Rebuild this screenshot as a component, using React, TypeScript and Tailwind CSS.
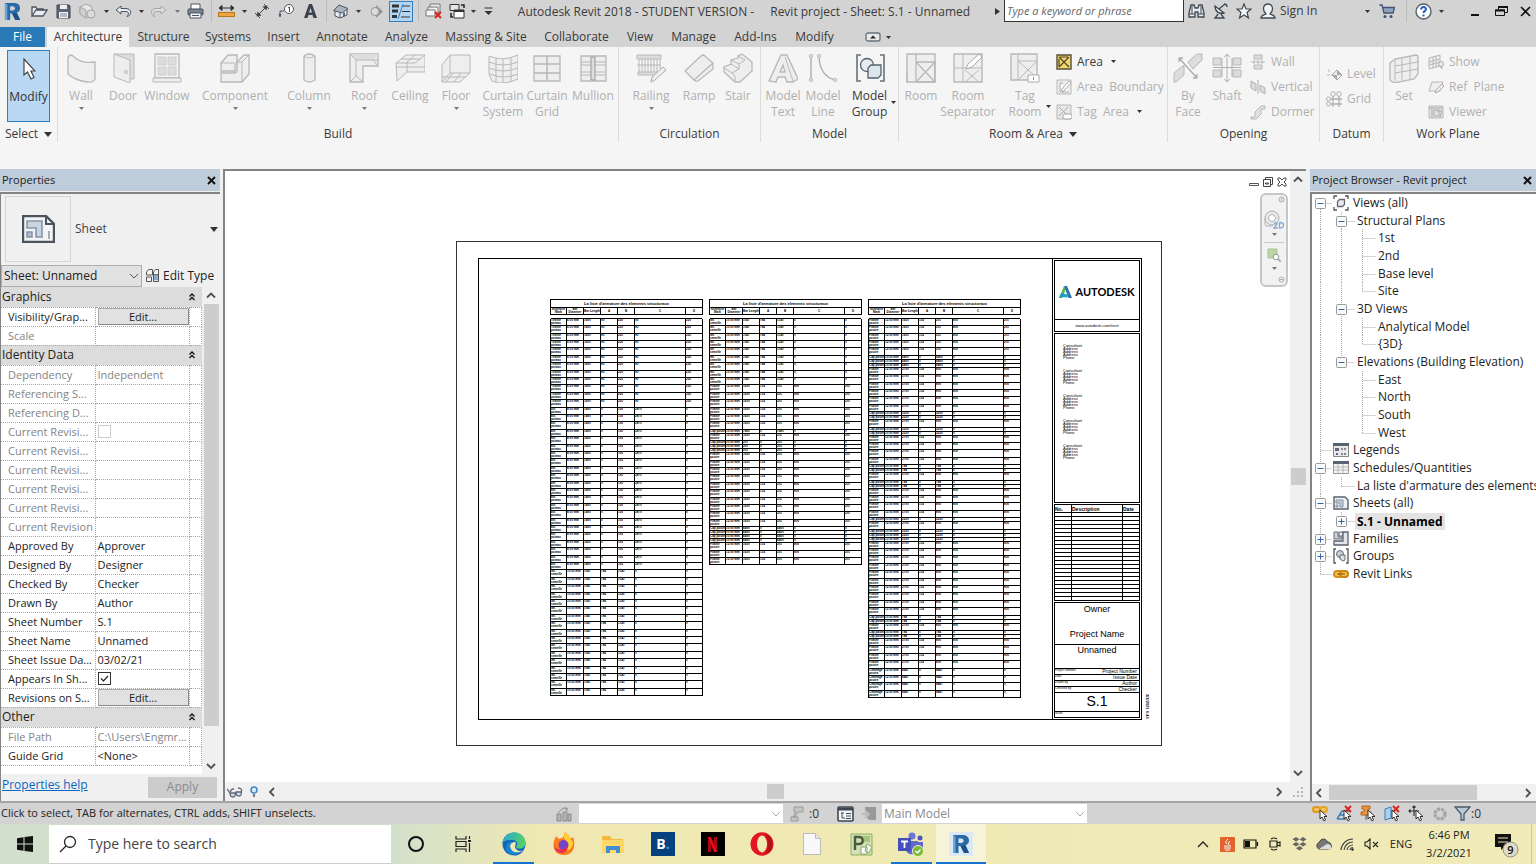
import React from "react";

type Kids = { children?: React.ReactNode };

function Svg({ w, h, vb, className = "", children }: Kids & { w: number; h: number; vb?: string; className?: string }) {
  return (
    <svg width={w} height={h} viewBox={vb ?? `0 0 ${w} ${h}`} fill="none" className={`shrink-0 ${className}`} aria-hidden="true">
      {children}
    </svg>
  );
}

function Caret({ dark = true, big = false }: { dark?: boolean; big?: boolean }) {
  return big ? (
    <Svg w={8} h={5}><path d="M0 0h8L4 5z" fill="#333" /></Svg>
  ) : (
    <Svg w={5} h={3}><path d="M0 0h5L2.500 3z" fill={dark ? "#333" : "#777"} /></Svg>
  );
}

function Slot({ w, label, children }: Kids & { w: string; label: string }) {
  return (
    <button type="button" aria-label={label} className={`flex h-[22px] shrink-0 items-center justify-center ${w}`}>
      {children}
    </button>
  );
}

function Rule({ w }: { w: string }) {
  return (
    <span className={`flex h-[22px] shrink-0 justify-center ${w}`}>
      <span className="w-px bg-[#bdbdbd]" />
    </span>
  );
}

const S = "#4b5563";

function RevitLogo({ size }: { size: number }) {
  return (
    <Svg w={size} h={size} vb="0 0 18 20">
      <path fillRule="evenodd" d="M1 1h9c4.500 0 7 2 7 5.500 0 2.500-1.500 4-3.500 4.800L17 19h-5l-3.500-7H6.500v7H1zM6.500 4.500v4.500H9c3.500 0 3.500-4.500 0-4.500z" fill="#2a6aa8" />
      <path d="M1 1l2.500 1.500V19H1z" fill="#6fa6d6" />
      <path d="M8.500 12l3.500 7h5l-3.500-7.700z" fill="#1b5289" />
    </Svg>
  );
}

function TitleBar() {
  return (
    <header className="flex h-[27px] items-start bg-[#d3d3d3]">
      <Slot w="w-[24px]" label="Application menu"><RevitLogo size={19} /></Slot>
      <Slot w="w-[30px]" label="Open">
        <Svg w={17} h={13}><path d="M1 11V2h4l1 2h6v2M1 11l4-6h11l-4 6z" stroke={S} strokeWidth="1.300" fill="#e9edf1" /></Svg>
      </Slot>
      <Slot w="w-[18px]" label="Save">
        <Svg w={15} h={15}><path d="M1 1h12l1 1v12H1z" fill="#5b6674" stroke="#3c4652" /><path d="M4 1h7v4H4z" fill="#eef1f4" /><path d="M3 8h9v6H3z" fill="#eef1f4" /><path d="M4 10h7M4 12h7" stroke="#7a8592" /></Svg>
      </Slot>
      <Slot w="w-[30px]" label="Synchronize">
        <Svg w={17} h={17}><path d="M1 4l6-3 6 3v7l-6 4-6-4z" stroke="#a5a5a5" fill="#e6e6e6" /><path d="M1 4l6 3v8l-6-4z" fill="#cfcfcf" stroke="#a5a5a5" /><circle cx="12" cy="11" r="4" fill="#dcdcdc" stroke="#a5a5a5" /></Svg>
      </Slot>
      <Slot w="w-[8px]" label="Synchronize options"><Caret /></Slot>
      <Slot w="w-[26px]" label="Undo">
        <Svg w={17} h={13}><path d="M6 1L1 5l5 4V6.500h5c3 0 3 3 1 5 5-1 5-8-1-8H6z" fill="#e8ebee" stroke={S} strokeLinejoin="round" /></Svg>
      </Slot>
      <Slot w="w-[10px]" label="Undo options"><Caret /></Slot>
      <Slot w="w-[24px]" label="Redo">
        <Svg w={17} h={13}><path d="M11 1l5 4-5 4V6.500H6c-3 0-3 3-1 5-5-1-5-8 1-8h5z" fill="#dedede" stroke="#a9a9a9" strokeLinejoin="round" /></Svg>
      </Slot>
      <Slot w="w-[14px]" label="Redo options"><Caret dark={false} /></Slot>
      <Slot w="w-[22px]" label="Print">
        <Svg w={17} h={16}><path d="M4 6V1h9v5" fill="#fff" stroke={S} /><rect x="1" y="6" width="15" height="6" rx="1" fill="#7b8693" stroke="#3f4954" /><path d="M3 10h11v5H3z" fill="#f6f7f8" stroke={S} /><path d="M5 12.500h7" stroke={S} /></Svg>
      </Slot>
      <Rule w="w-[10px]" />
      <Slot w="w-[20px]" label="Measure">
        <Svg w={17} h={13}><path d="M1 3h15M4 0.500L1 3l3 2.500zM13 0.500L16 3l-3 2.500z" stroke="#333" fill="#333" /><rect x="0.500" y="7.500" width="16" height="4" fill="#eda63e" stroke="#b9761b" /></Svg>
      </Slot>
      <Slot w="w-[16px]" label="Measure options"><Caret /></Slot>
      <Slot w="w-[20px]" label="Aligned dimension">
        <Svg w={16} h={16}><path d="M3 13L13 3M1 10l5 5M10 1l5 5" stroke="#444" /><path d="M2.500 13.500l1-5 4 4zM13.500 2.500l-1 5-4-4z" fill="#444" /></Svg>
      </Slot>
      <Slot w="w-[28px]" label="Tag by category">
        <Svg w={17} h={14}><circle cx="11" cy="5" r="4.500" fill="#fff" stroke={S} /><path d="M2 12V7h4M1 10l1 3 1-3M10 4l1.500-1v5" stroke={S} /></Svg>
      </Slot>
      <Slot w="w-[20px]" label="Text">
        <Svg w={13} h={14}><path fillRule="evenodd" d="M0 14L5 0h3l5 14H9.500l-1-3h-4l-1 3zM5 8.500h3L6.500 4z" fill="#3b444e" /></Svg>
      </Slot>
      <Rule w="w-[12px]" />
      <Slot w="w-[18px]" label="Default 3D view">
        <Svg w={16} h={16}><path d="M2 7v6l5 2 7-3V6" fill="#e8ecf0" stroke={S} /><path d="M0.500 7.500L6 2l9 3.500L9 10z" fill="#aab4bf" stroke={S} /><path d="M7 15v-5" stroke={S} /><path d="M10 10l2-.8V13l-2 .8z" fill="#5b6674" /></Svg>
      </Slot>
      <Slot w="w-[16px]" label="3D view options"><Caret /></Slot>
      <Slot w="w-[20px]" label="Section">
        <Svg w={13} h={13}><path d="M6 0l7 6.500L6 13z" fill="#959595" /><circle cx="5" cy="6.500" r="4" fill="#dcdcdc" stroke="#959595" /></Svg>
      </Slot>
      <Slot w="w-[30px]" label="Thin lines">
        <span className="flex h-[21px] w-[24px] items-center justify-center border border-[#2f7fc1] bg-[#b5d6f3]">
          <Svg w={18} h={15}><path d="M0 2h7M0 7h6M0 12.500h5" stroke="#333" strokeWidth="3" /><path d="M10 2h8M10 7.500h8M9 13h9" stroke="#333" /><path d="M11 0L6 15" stroke="#2f7fc1" /></Svg>
        </span>
      </Slot>
      <Rule w="w-[4px]" />
      <Slot w="w-[26px]" label="Close inactive windows">
        <Svg w={17} h={16}><path d="M5 1h10v8H5z" fill="#eee" stroke="#777" /><path d="M3 4h10v7H3z" fill="#eee" stroke="#777" /><path d="M1 7h9v6H1z" fill="#f4f4f4" stroke="#777" /><path d="M10 9l6 6M16 9l-6 6" stroke="#d8261c" strokeWidth="2" /></Svg>
      </Slot>
      <Slot w="w-[22px]" label="Switch windows">
        <Svg w={17} h={17}><path d="M1 1.500h9v6H1z" fill="#e5e5e5" stroke="#333" /><path d="M5 7h10v8H5z" fill="#fff" stroke="#333" /><path d="M5 8h10" stroke="#333" strokeWidth="2" /><path d="M12 2h3v3M2 10v4h2" stroke="#222" strokeWidth="1.500" /></Svg>
      </Slot>
      <Slot w="w-[10px]" label="Window options"><Caret /></Slot>
      <Slot w="w-[20px]" label="Customize quick access">
        <Svg w={9} h={8}><path d="M0.500 1h8" stroke="#333" /><path d="M0.500 4h8l-4 4z" fill="#333" /></Svg>
      </Slot>
      <h1 className="flex flex-1 justify-center gap-4 pt-1 text-xs leading-4 whitespace-nowrap text-[#3a3a3a]">
        <span>Autodesk Revit 2018 - STUDENT VERSION -</span>
        <span>Revit project - Sheet: S.1 - Unnamed</span>
      </h1>
      <Slot w="w-[14px]" label="Expand search"><Svg w={5} h={7}><path d="M0 0l5 3.500L0 7z" fill="#333" /></Svg></Slot>
      <input aria-label="Search help" placeholder="Type a keyword or phrase" className="h-[22px] w-[180px] shrink-0 border border-t-0 border-[#333] bg-white px-[2px] text-[11px] italic placeholder:text-[#666]" />
      <Slot w="w-[24px]" label="Search">
        <Svg w={17} h={16}><path d="M3 2h3l1 3h3l1-3h3l2 8v4h-6V9H7v5H1v-4z" fill="#e8ecf0" stroke="#3f4954" strokeWidth="1.300" /><path d="M1 11h6M10 11h6M4 3v8M13 3v8" stroke="#3f4954" /></Svg>
      </Slot>
      <Slot w="w-[24px]" label="Subscription center">
        <Svg w={15} h={16}><path d="M2 3c0 6 4 8 9 7z" fill="#e8ecf0" stroke="#3f4954" strokeWidth="1.300" /><path d="M6 6l6-5M11 1a3 3 0 013 3M5 11l-3 4h9l-3-4" stroke="#3f4954" strokeWidth="1.300" /></Svg>
      </Slot>
      <Slot w="w-[24px]" label="Favorites">
        <Svg w={16} h={16}><path d="M8 1l2 5h5l-4 3.500 1.500 5.500L8 12l-4.500 3L5 9.500 1 6h5z" fill="#f3f5f7" stroke="#3f4954" strokeWidth="1.200" /></Svg>
      </Slot>
      <Slot w="w-[24px]" label="Account">
        <Svg w={16} h={16}><path d="M1 15c0-3 3-3 5-4-4-4-3-10 2-10s6 6 2 10c2 1 5 1 5 4z" fill="#f3f5f7" stroke="#3f4954" strokeWidth="1.300" /></Svg>
      </Slot>
      <button type="button" className="h-[22px] w-[80px] shrink-0 text-left text-xs text-[#3a3a3a]">Sign In</button>
      <Slot w="w-[14px]" label="Account options"><Caret /></Slot>
      <Slot w="w-[26px]" label="App store">
        <Svg w={16} h={15}><path d="M0.500 1H3l2 8h9l1.500-5.500H4" fill="#8fa5bf" stroke="#3f5570" strokeWidth="1.300" /><circle cx="6" cy="12.500" r="1.500" fill="#3f5570" /><circle cx="12" cy="12.500" r="1.500" fill="#3f5570" /></Svg>
      </Slot>
      <Rule w="w-[12px]" />
      <Slot w="w-[22px]" label="Help">
        <Svg w={17} h={17}><circle cx="8.500" cy="8.500" r="7.500" fill="#fff" stroke="#56616e" strokeWidth="1.400" /><path d="M6 6.500c0-3.500 5.500-3 5 0-.3 1.500-2.500 1.500-2.500 3.500M8.500 11.500v2" stroke="#2465b5" strokeWidth="2" /></Svg>
      </Slot>
      <Slot w="w-[14px]" label="Help options"><Caret /></Slot>
      <span className="w-[14px] shrink-0" />
      <Slot w="w-[26px]" label="Minimize"><Svg w={8} h={10}><path d="M0 9h8" stroke="#111" strokeWidth="2" /></Svg></Slot>
      <Slot w="w-[26px]" label="Restore">
        <Svg w={13} h={12}><path d="M3.500 4V1.500h9v6H10" stroke="#111" /><path d="M3 2h10" stroke="#111" strokeWidth="2" /><path d="M.5 5h9v5.500h-9z" stroke="#111" /><path d="M0 5.500h10" stroke="#111" strokeWidth="2" /></Svg>
      </Slot>
      <Slot w="w-[22px]" label="Close"><Svg w={11} h={11}><path d="M1 1l9 9M10 1l-9 9" stroke="#111" strokeWidth="1.600" /></Svg></Slot>
    </header>
  );
}

const tabs: [string, string][] = [
  ["Structure", "w-[67px]"], ["Systems", "w-[62px]"], ["Insert", "w-[49px]"], ["Annotate", "w-[68px]"],
  ["Analyze", "w-[61px]"], ["Massing & Site", "w-[98px]"], ["Collaborate", "w-[83px]"], ["View", "w-[44px]"],
  ["Manage", "w-[63px]"], ["Add-Ins", "w-[61px]"], ["Modify", "w-[57px]"],
];

function Tabs() {
  return (
    <nav className="flex h-5 bg-[#d3d3d3] text-xs leading-5 whitespace-nowrap text-[#3a3a3a]">
      <button type="button" className="w-[45px] bg-[#2b7ab8] text-white">File</button>
      <button type="button" className="ml-[2px] w-[82px] bg-[#f5f5f5]">Architecture</button>
      <span className="w-px" />
      {tabs.map(([t, w]) => (
        <button key={t} type="button" className={`flex justify-center ${w}`}>{t}</button>
      ))}
      <button type="button" aria-label="Ribbon display" className="ml-[22px] flex items-center gap-[5px]">
        <Svg w={16} h={10}><rect x="1" y="1" width="14" height="8" rx="2" fill="#e8e8e8" stroke="#66707c" strokeWidth="1.300" /><path d="M5 6.500h6L8 3.500z" fill="#222" /></Svg>
        <Caret />
      </button>
    </nav>
  );
}

/* Ribbon icons: a disabled command is drawn in light grey outlines. */
const G = "#b8b8b8";
const F = "#eeeeee";

const big: Record<string, React.ReactNode> = {
  wall: <path d="M2 4q3-4 6 0 8 7 21 5v17q-2 4-8 3Q8 27 2 21z" fill={F} stroke={G} strokeWidth="1.300" />,
  door: <><path d="M6 1h20v25h-4" fill="#ddd" stroke={G} /><path d="M6 1l16 6v23L6 24z" fill={F} stroke={G} /><circle cx="18" cy="19" r="1.500" stroke={G} /></>,
  window: <><path d="M3 1h24v24H3z" fill="#f3f3f3" stroke={G} strokeWidth="1.300" /><path d="M6 4h8v8H6zM16 4h8v8h-8zM6 14h8v8H6zM16 14h8v8h-8z" fill="#dcdcdc" stroke="#cfcfcf" /><path d="M1 25h28v4H1z" fill={F} stroke={G} /></>,
  component: <><path d="M1 10l7-8h9v8l-2 2v6H1z" fill={F} stroke={G} strokeWidth="1.300" /><path d="M1 20h13q3 0 3-3V9l7-7h5v19l-7 8H1z" fill={F} stroke={G} strokeWidth="1.300" /><path d="M17 9h5v20M22 9l7-7M1 10h14" stroke={G} /></>,
  column: <><path d="M10 3q5-4 11 0v24q-6 4-11 0z" fill={F} stroke={G} strokeWidth="1.300" /><path d="M10 3q5 4 11 0" stroke={G} /></>,
  roof: <><path d="M1 1h28v12H14v16H1z" fill={F} stroke={G} strokeWidth="1.300" /><path d="M1 1h28l-5 6H7z" fill="#dedede" /><path d="M1 1l6 6h22M7 7v16l-6 6M7 23l7 6M29 13l-5-6" stroke={G} /></>,
  ceiling: <><path d="M1 10l10-8h19v17H12l-10 9z" fill={F} stroke={G} /><path d="M1 10h19l10-8M12 10v9M6 6h19M11 10l9-8M1 14h29" stroke={G} /></>,
  floor: <><path d="M1 12L9 2h20v18L19 29H1z" fill={F} stroke={G} /><path d="M9 2v18h20M9 20l-8 9M1 24h24M12 20l-7 9M20 20l-7 9" stroke={G} /></>,
  csystem: <><path d="M1 3q14 6 29-1v24q-15 7-26 2L1 21z" fill={F} stroke={G} /><path d="M1 9q14 6 29 0M1 15q14 6 29 0M2 21q14 6 28 0M8 5v24M15 6v24M23 4v24" stroke={G} /></>,
  cgrid: <><path d="M2 3h26v25H2z" fill={F} stroke={G} strokeWidth="1.300" /><path d="M15 3v25M2 11h26M2 20h26" stroke={G} strokeWidth="1.500" /></>,
  mullion: <><path d="M3 3h25v25H3z" fill={F} stroke={G} strokeWidth="1.300" /><path d="M3 9h25M3 12h25M3 19h25M3 22h25" stroke={G} /><path d="M13 4h4v23h-4z" fill="#ddd" stroke="#999" /></>,
  railing: <><path d="M1 2h24v4H1zM2 19h22v3H2z" fill="#ddd" stroke={G} /><path d="M3 6v13M6 6v13M9 6v13M12 6v13M15 6v13M18 6v13M21 6v13M24 6v10M1 12h24" stroke={G} /><path d="M15 29l1-5 11-10 3 3-11 10z" fill={F} stroke="#aaa" /></>,
  ramp: <path d="M1 18L17 3q2-2 4 0l8 7v6L14 28q-2 1-4-1zM10 27L29 10" fill={F} stroke={G} strokeWidth="1.300" />,
  stair: <><path d="M1 14l7-3V7l7-2V3l4-2 10 8v9L17 29h-5L1 19z" fill={F} stroke={G} strokeWidth="1.300" /><path d="M1 15l8 5 7-4-8-5M16 16v-5l6-4-7-4M9 20l3 3v6M16 11l-8-4" stroke={G} /></>,
  mtext: <><path fillRule="evenodd" d="M1 28L13 2h6l11 24-5 3h-6l-2-5h-7l-2 5zM12 19h5l-2-7z" fill={F} stroke={G} strokeWidth="1.400" /><path d="M17 4l8 24" stroke={G} /></>,
  mline: <><path d="M3 4v22M11 4q1 19 16 23" stroke="#aaa" strokeWidth="1.300" /><g fill="#fff" stroke="#aaa"><circle cx="3" cy="3" r="1.500" /><circle cx="3" cy="27" r="1.500" /><circle cx="11" cy="3" r="1.500" /><circle cx="27" cy="27" r="1.500" /></g></>,
  mgroup: <><path d="M6 2H2v26h4M25 2h4v26h-4" stroke="#66707c" strokeWidth="1.600" /><circle cx="12" cy="12" r="6.500" fill="#e8ecf0" stroke="#56616e" strokeWidth="1.300" /><path d="M13 15l3-3h10v10l-3 3H13z" fill="#dbe5ee" stroke="#56616e" strokeWidth="1.300" /></>,
  room: <><path d="M1 1h28v28H1z" fill={F} stroke={G} strokeWidth="1.400" /><path d="M10 1v8M1 20v9M10 12v17M10 9h19v20H10zM10 9l19 20M29 9L10 29" stroke={G} strokeWidth="1.300" /></>,
  rsep: <><path d="M1 1h28v28H1z" fill={F} stroke={G} strokeWidth="1.400" /><path d="M10 1v28M1 15h28M12 17l14 12M26 17L12 29" stroke={G} /><path d="M13 16l2-5L26 1l3 3-10 10z" fill="#fff" stroke="#aaa" /></>,
  troom: <><path d="M1 1h26v26H1z" fill={F} stroke={G} strokeWidth="1.400" /><path d="M8 1v26M8 8h19M8 8l19 17M27 8L8 27" stroke={G} /><path d="M18 22h11v7H18z" fill="#fff" stroke="#aaa" /><path d="M23.500 24v3" stroke="#888" /></>,
  face: <><path d="M1 20l10-8v10L3 29H1zM15 9l9-8h5v6l-9 9z" fill="#ddd" stroke={G} /><path d="M6 5l18 20M6 5v4M6 5h4M24 25v-4M24 25h-4" stroke="#aaa" strokeWidth="1.300" /></>,
  shaft: <><g fill="#dcdcdc" stroke={G}><path d="M1 5h8v7H1zM21 5h8v7h-8zM1 17h8v7H1zM21 17h8v7h-8z" /></g><path d="M15 1v28M1 14.500h28M12 4l3-3 3 3M12 26l3 3 3-3M10 5v19M20 5v19" stroke="#b0b0b0" /></>,
  set: <><path d="M1 10l5-4 21-4q2 0 2 2v17l-4 5-20 4-4-3z" fill={F} stroke={G} strokeWidth="1.300" /><path d="M6 6v22M6 13l23-4M6 20l23-4M13 5v22M21 4v22" stroke={G} /></>,
};

const small: Record<string, React.ReactNode> = {
  area: <><path d="M1 1h14v14H1z" fill="#f2d768" stroke="#55503a" strokeWidth="1.400" /><path d="M4 3h8M3 3l10 10M13 3L3 13M3 5v8" stroke="#4a4633" strokeWidth="1.200" /></>,
  areab: <><path d="M1 1h14v14H1z" fill={F} stroke={G} /><path d="M4 4h3M4 4v9h9M5 11l8-9 2 2-8 9z" stroke="#aaa" fill="#fff" /></>,
  areat: <><path d="M1 1h14v14H1z" fill="#e6e6e6" stroke={G} /><path d="M3 3l9 9M12 3l-9 9" stroke="#aaa" /><rect x="7" y="10" width="9" height="5" rx="2" fill="#fff" stroke="#aaa" /></>,
  owall: <path d="M4 1h8v4H4zM4 11h8v4H4zM1 8h14M8 6v4M4 6v4M12 6v4" stroke={G} fill="#ddd" />,
  overt: <path d="M1 2l5 3v7L1 9zM10 6l5 3v6l-5-3zM8 1v14" stroke="#b0b0b0" fill="#ddd" />,
  odorm: <path d="M1 13h4V8l6-6h4v3h-4v5l-5 5H1z" stroke={G} fill="#e2e2e2" />,
  level: <><path d="M1 9h15M3 3v3" stroke={G} strokeDasharray="3 1" /><path d="M11 4l5 5-5 5-5-5z" fill="#eee" stroke="#aaa" /><path d="M11 4v5h5zM11 14V9H6z" fill="#aaa" /></>,
  grid: <><path d="M7 5v11M13 5v11M4 8h12M4 13h12" stroke="#b0b0b0" strokeWidth="1.300" /><g fill="#f5f5f5" stroke="#b0b0b0"><circle cx="7" cy="3" r="2.300" /><circle cx="13" cy="3" r="2.300" /><circle cx="2.500" cy="8" r="2" /><circle cx="2.500" cy="13" r="2" /></g></>,
  show: <><path d="M1 4l11-3v11L1 15zM1 8l11-3M1 11l11-3M5 3v11M8 2v11" stroke={G} fill={F} /><circle cx="13" cy="10" r="2.500" fill="#eee" stroke="#aaa" /><path d="M12 13h2v2" stroke="#aaa" /></>,
  ref: <><path d="M4 3h11l-3 9H1z" stroke={G} fill={F} /><path d="M7 14l1-3 6-6 2 2-6 6z" fill="#eee" stroke="#aaa" /></>,
  viewer: <><path d="M1 2h14v12H1z" fill="#e2e2e2" stroke={G} /><path d="M1 4h14M4 4v10M6 6h5v6H6zM9 7h5l-2 6" stroke="#aaa" /></>,
};

function Big({ icon, lines, w, caret, on }: { icon: string; lines: string[]; w: string; caret?: boolean; on?: boolean }) {
  return (
    <button type="button" className={`flex shrink-0 flex-col items-center text-xs leading-4 whitespace-nowrap ${w} ${on ? "text-[#3a3a3a]" : "text-[#b0b0b0]"}`}>
      <Svg w={30} h={30} className="mt-[6px] mb-[5px]">{big[icon]}</Svg>
      {lines.map((l) => <span key={l}>{l}</span>)}
      {caret && <span className="mt-[3px]"><Caret dark={false} /></span>}
    </button>
  );
}

function Small({ icon, label, on, caret }: { icon: string; label: string; on?: boolean; caret?: boolean }) {
  return (
    <button type="button" className={`flex h-[25px] items-center gap-[5px] text-xs whitespace-pre ${on ? "text-[#3a3a3a]" : "text-[#b0b0b0]"}`}>
      <Svg w={16} h={16}>{small[icon]}</Svg>
      <span>{label}</span>
      {caret && <span className="ml-[3px]"><Caret /></span>}
    </button>
  );
}

function Panel({ title, w, caret, last, children }: Kids & { title: string; w: string; caret?: boolean; last?: boolean }) {
  return (
    <section className={`flex h-[95px] shrink-0 flex-col justify-between ${last ? "" : "border-r border-[#dcdcdc]"} ${w}`}>
      <div className="flex">{children}</div>
      <h2 className="flex items-center justify-center gap-[6px] text-xs leading-4 text-[#3a3a3a]">{title}{caret && <Caret big />}</h2>
    </section>
  );
}

function Ribbon() {
  return (
    <div className="flex h-[122px] overflow-hidden bg-[#f5f5f5]">
      <section className="flex h-[95px] w-[58px] shrink-0 flex-col justify-between border-r border-[#dcdcdc] pt-[3px] pl-[7px]">
        <button type="button" className="flex h-[72px] w-[43px] flex-col items-center border border-[#2f7fc1] bg-[#b9d8f4] text-xs leading-4 text-[#333]">
          <Svg w={14} h={22} className="mt-[7px] mb-[9px]"><path d="M2 1v16l3.500-3L9 21l3-1.500L9 13h4z" fill="#fff" stroke="#444" strokeWidth="1.200" /></Svg>
          Modify
        </button>
        <h2 className="-ml-[2px] flex items-center gap-[6px] text-xs leading-4 text-[#3a3a3a]">Select <Caret big /></h2>
      </section>
      <Panel title="Build" w="w-[561px]">
        <span className="w-[2px]" />
        <Big icon="wall" lines={["Wall"]} w="w-[42px]" caret />
        <Big icon="door" lines={["Door"]} w="w-[42px]" />
        <Big icon="window" lines={["Window"]} w="w-[46px]" />
        <Big icon="component" lines={["Component"]} w="w-[90px]" caret />
        <Big icon="column" lines={["Column"]} w="w-[58px]" caret />
        <Big icon="roof" lines={["Roof"]} w="w-[52px]" caret />
        <Big icon="ceiling" lines={["Ceiling"]} w="w-[40px]" />
        <Big icon="floor" lines={["Floor"]} w="w-[52px]" caret />
        <Big icon="csystem" lines={["Curtain", "System"]} w="w-[42px]" />
        <Big icon="cgrid" lines={["Curtain", "Grid"]} w="w-[46px]" />
        <Big icon="mullion" lines={["Mullion"]} w="w-[46px]" />
      </Panel>
      <Panel title="Circulation" w="w-[142px]">
        <span className="w-[9px]" />
        <Big icon="railing" lines={["Railing"]} w="w-[46px]" caret />
        <Big icon="ramp" lines={["Ramp"]} w="w-[50px]" />
        <Big icon="stair" lines={["Stair"]} w="w-[28px]" />
      </Panel>
      <Panel title="Model" w="w-[138px]">
        <span className="w-[2px]" />
        <Big icon="mtext" lines={["Model", "Text"]} w="w-[40px]" />
        <Big icon="mline" lines={["Model", "Line"]} w="w-[40px]" />
        <span className="w-[5px]" />
        <Big icon="mgroup" lines={["Model", "Group"]} w="w-[43px]" on />
        <span className="pt-[54px]"><Caret /></span>
      </Panel>
      <Panel title="Room & Area" w="w-[269px]" caret>
        <span className="w-[3px]" />
        <Big icon="room" lines={["Room"]} w="w-[38px]" />
        <Big icon="rsep" lines={["Room", "Separator"]} w="w-[56px]" />
        <span className="w-[8px]" />
        <Big icon="troom" lines={["Tag", "Room"]} w="w-[42px]" />
        <span className="w-[10px] pt-[58px]"><Caret /></span>
        <div className="flex flex-col pt-[2px]">
          <Small icon="area" label="Area" on caret />
          <Small icon="areab" label="Area  Boundary" />
          <Small icon="areat" label="Tag  Area" caret />
        </div>
      </Panel>
      <Panel title="Opening" w="w-[152px]">
        <span className="w-[2px]" />
        <Big icon="face" lines={["By", "Face"]} w="w-[36px]" />
        <Big icon="shaft" lines={["Shaft"]} w="w-[42px]" />
        <div className="flex flex-col pt-[2px] pl-[2px]">
          <Small icon="owall" label="Wall" />
          <Small icon="overt" label="Vertical" />
          <Small icon="odorm" label="Dormer" />
        </div>
      </Panel>
      <Panel title="Datum" w="w-[64px]">
        <div className="flex flex-col pt-[14px] pl-[6px]">
          <Small icon="level" label="Level" />
          <Small icon="grid" label="Grid" />
        </div>
      </Panel>
      <Panel title="Work Plane" w="w-[128px]" last>
        <span className="w-[2px]" />
        <Big icon="set" lines={["Set"]} w="w-[36px]" />
        <div className="flex flex-col pt-[2px] pl-[6px]">
          <Small icon="show" label="Show" />
          <Small icon="ref" label="Ref  Plane" />
          <Small icon="viewer" label="Viewer" />
        </div>
      </Panel>
    </div>
  );
}

function PanelTitle({ children }: Kids) {
  return (
    <div className="flex h-[22px] shrink-0 items-center justify-between bg-[#bfcddb] pr-1 pl-[2px] text-[11px] text-[#222]">
      <h2>{children}</h2>
      <button type="button" aria-label="Close panel"><Svg w={9} h={9}><path d="M1 1l7 7M8 1L1 8" stroke="#111" strokeWidth="2" /></Svg></button>
    </div>
  );
}

function Chevron({ dir, color = "#505050" }: { dir: "up" | "down" | "left" | "right"; color?: string }) {
  const d = { up: "M1 6.500L5 2.500l4 4", down: "M1 3l4 4 4-4", left: "M7 1L3 5l4 4", right: "M3 1l4 4-4 4" }[dir];
  return <Svg w={10} h={10}><path d={d} stroke={color} strokeWidth="1.800" /></Svg>;
}

type Row = { head?: string; name?: string; value?: string; off?: boolean; kind?: "edit" | "check" };
const off = (name: string, value = ""): Row => ({ name, value, off: true });
const rows: Row[] = [
  { head: "Graphics" },
  { name: "Visibility/Grap...", kind: "edit" },
  off("Scale"),
  { head: "Identity Data" },
  off("Dependency", "Independent"),
  off("Referencing S..."),
  off("Referencing D..."),
  { name: "Current Revisi...", off: true, kind: "check" },
  off("Current Revisi..."), off("Current Revisi..."), off("Current Revisi..."), off("Current Revisi..."),
  off("Current Revision"),
  { name: "Approved By", value: "Approver" },
  { name: "Designed By", value: "Designer" },
  { name: "Checked By", value: "Checker" },
  { name: "Drawn By", value: "Author" },
  { name: "Sheet Number", value: "S.1" },
  { name: "Sheet Name", value: "Unnamed" },
  { name: "Sheet Issue Da...", value: "03/02/21" },
  { name: "Appears In Sh...", kind: "check" },
  { name: "Revisions on S...", kind: "edit" },
  { head: "Other" },
  off("File Path", "C:\\Users\\Engmr..."),
  { name: "Guide Grid", value: "<None>" },
];

function CheckCell({ name, checked }: { name: string; checked: boolean }) {
  return (
    <span className="grid h-[13px] w-[13px]">
      <input type="checkbox" aria-label={name} defaultChecked={checked} disabled={!checked} className={`h-[13px] w-[13px] appearance-none border bg-white [grid-area:1/1] ${checked ? "border-[#333]" : "border-[#ccc]"}`} />
      {checked && <Svg w={13} h={13} className="pointer-events-none [grid-area:1/1]"><path d="M3 6.500L5.500 9 10 4" stroke="#222" strokeWidth="1.200" /></Svg>}
    </span>
  );
}

function Properties() {
  return (
    <aside className="flex w-[220px] shrink-0 flex-col bg-[#f0f0f0]">
      <PanelTitle>Properties</PanelTitle>
      <div className="mt-px flex flex-1 flex-col border-t-2 border-l border-[#848484]">
        <div className="flex h-[70px] items-center gap-1 pr-[2px] pl-1">
          <div className="flex h-[66px] w-[66px] items-center justify-center border border-[#d5d5d5]">
            <Svg w={33} h={28}>
              <path d="M1 1h23l8 8v18H1z" fill="#f2f4f6" stroke="#4b535d" strokeWidth="2.400" />
              <path d="M24 1v8h8" stroke="#4b535d" strokeWidth="2" />
              <path d="M5 6h15v16h-6v-9H5z" fill="#c9d4e0" stroke="#8695a6" strokeWidth="1.600" />
              <path d="M5 17h5v5H5z" fill="#aebccb" stroke="#8695a6" strokeWidth="1.600" /><path d="M27 16v8" stroke="#aaa" strokeWidth="2" />
            </Svg>
          </div>
          <span className="flex-1 text-xs text-[#444]">Sheet</span>
          <button type="button" aria-label="Type selector"><Caret big /></button>
        </div>
        <div className="flex h-[23px] items-center">
          <span className="grid h-[22px] w-[141px] items-center">
            <select aria-label="Element filter" className="h-[22px] appearance-none border border-[#adadad] bg-[#e1e1e1] pl-[2px] text-xs text-[#222] [grid-area:1/1]">
              <option>Sheet: Unnamed</option>
            </select>
            <span className="pointer-events-none mr-[3px] justify-self-end [grid-area:1/1]"><Svg w={10} h={10}><path d="M1 3l4 4 4-4" stroke="#555" /></Svg></span>
          </span>
          <button type="button" className="ml-1 flex items-center gap-[4px] text-xs whitespace-nowrap text-[#222]">
            <Svg w={13} h={13}><path d="M.5 3l2-2.500h4V6H.5zM7.500 3l2-2.500h3V6h-5zM.5 8h5v4.500h-5z" fill="#f4f4f4" stroke="#555" /><path d="M7.500 6h5v6.500h-5z" fill="#cfe2f5" stroke="#555" /><path d="M8 8h4M8 10h4" stroke="#3f78b5" /></Svg>
            Edit Type
          </button>
        </div>
        <div className="flex bg-white">
          <div className="flex-1 pb-2">
            <table className="w-full table-fixed border-collapse text-[11px] whitespace-nowrap">
              <colgroup><col className="w-[94px]" /><col className="w-[94px]" /><col /></colgroup>
              <tbody>
                {rows.map((r, i) =>
                  r.head ? (
                    <tr key={i} className="h-[20px] bg-[#dcdcdc]">
                      <th colSpan={2} className="p-0 pl-px text-left text-xs leading-[18px] font-normal text-[#222]">{r.head}</th>
                      <td className="p-0">
                        <Svg w={6} h={8}><path d="M.5 3.500l2.500-2.500 2.500 2.500M.5 7l2.500-2.500L5.500 7" stroke="#111" strokeWidth="1.300" /></Svg>
                      </td>
                    </tr>
                  ) : (
                    <tr key={i} className={`h-[19px] ${r.off ? "text-[#848484]" : "text-[#222]"}`}>
                      <td className="border border-l-0 border-dotted border-[#a8a8a8] p-0 pl-[7px] leading-[17px]">{r.name}</td>
                      <td className="border border-dotted border-[#a8a8a8] p-0 pl-[2px] leading-[17px]">
                        {r.kind === "edit" ? (
                          <button type="button" className="block h-[17px] w-full border border-t-[#aaa] border-r-[#888] border-b-[#888] border-l-[#aaa] bg-[#e1e1e1] leading-[14px]">Edit...</button>
                        ) : r.kind === "check" ? (
                          <CheckCell name={r.name!} checked={!r.off} />
                        ) : r.value}
                      </td>
                      <td className="border border-dotted border-[#a8a8a8] p-0" />
                    </tr>
                  )
                )}
              </tbody>
            </table>
          </div>
          <div className="flex w-[18px] flex-col items-center bg-[#f0f0f0]">
            <span className="flex h-[17px] items-center"><Chevron dir="up" /></span>
            <span className="w-[15px] flex-1 bg-[#cdcdcd]" />
            <span className="flex h-[48px] items-end pb-[3px]"><Chevron dir="down" /></span>
          </div>
        </div>
        <div className="flex flex-1 items-start justify-between pr-[3px] pl-px">
          <a href="#help" className="pt-px text-xs leading-5 text-[#0b66c3] underline">Properties help</a>
          <button type="button" disabled className="mt-[3px] h-[21px] w-[69px] bg-[#ccc] text-xs text-[#8b8b8b]">Apply</button>
        </div>
      </div>
    </aside>
  );
}

/* Reinforcement schedules on the sheet; `two` marks a row whose mark takes two lines. */
type Bar = { two: boolean; cells: string[] };
const rep = (n: number, two: boolean, cells: string[]): Bar[] => Array.from({ length: n }, () => ({ two, cells }));
const fil = (len: string, a: string, b: string, c: string, d: string) => ["Filante|poutre", "12.00 mm", len, a, b, c, d];
const cap = (len: string) => ["Cap poutre", "10.00 mm", len, "0", len, "0", "0"];
const listA: Bar[] = [
  ...rep(12, true, ["Tirante|poteau", "6.00 mm", "1600", "90", "220", "90", "220"]),
  ...rep(22, true, ["Etr.|poteau", "8.00 mm", "1400", "0", "150", "2870", "0"]),
  ...rep(17, true, ["Sn.|semelle", "10.00 mm", "1047", "784", "1140", "0", "0"]),
];
const listB: Bar[] = [
  ...rep(9, true, ["Sn.|semelle", "10.00 mm", "1047", "784", "1140", "0", "0"]),
  ...rep(6, true, fil("1630", "114", "201", "800", "201")),
  ...rep(1, false, cap("7680")), ...rep(1, true, fil("1630", "114", "201", "800", "201")), ...rep(3, false, cap("201")),
  ...rep(10, true, fil("1630", "114", "201", "800", "201")), ...rep(4, false, cap("6400")),
  ...rep(3, true, fil("1630", "114", "201", "800", "201")),
];
const longT = fil("2700", "114", "800", "800", "800");
const listC: Bar[] = [
  ...rep(5, true, fil("1630", "114", "201", "800", "201")), ...rep(3, false, cap("6400")), ...rep(6, true, longT),
  ...rep(2, false, cap("2230")), ...rep(1, true, longT), ...rep(2, false, cap("2230")), ...rep(4, true, longT),
  ...rep(2, false, cap("784")), ...rep(1, true, longT), ...rep(2, false, cap("784")), ...rep(4, true, longT),
  ...rep(1, false, cap("2230")), ...rep(1, true, longT), ...rep(3, false, cap("2230")), ...rep(10, true, longT),
  ...rep(2, false, cap("784")), ...rep(1, true, longT), ...rep(2, false, cap("784")), ...rep(4, true, longT),
  ...rep(4, true, ["Chainage|poutre", "12.00 mm", "8447", "0", "8447", "0", "0"]),
];
const heads = ["Schedule|Mark", "Bar|Diameter", "Bar Length", "A", "B", "C", "D"];
const split = (s: string) => s.split("|").map((p) => <span key={p} className="block">{p}</span>);

function Cols() {
  return <colgroup><col className="w-[16px]" /><col className="w-[17px]" /><col className="w-[17px]" /><col className="w-[17px]" /><col className="w-[17px]" /><col className="w-[51px]" /><col className="w-[17px]" /></colgroup>;
}

function Schedule({ list }: { list: Bar[] }) {
  let tall = 0;
  const body = list.map((b, i) => {
    const h = !b.two ? "h-[4px]" : [1, 4].includes(tall++ % 5) ? "h-[8px]" : "h-[7px]";
    return (
      <tr key={i} className={h}>
        {b.cells.map((c, j) => <td key={j} className="border border-black p-0 align-top">{split(c)}</td>)}
      </tr>
    );
  });
  return (
    <table className="w-[152px] table-fixed border-collapse border border-black text-[3px] leading-[3px] font-bold whitespace-nowrap">
      <Cols />
      <thead>
        <tr className="h-[8px]"><th colSpan={7} className="border border-black p-0 text-[4px]">La liste d'armature des elements structuraux</th></tr>
        <tr className="h-[7px]">{heads.map((h) => <th key={h} className="border border-black p-0">{split(h)}</th>)}</tr>
        <tr className="h-[4px]"><td colSpan={7} className="border-x border-white p-0" /></tr>
      </thead>
      <tbody>{body}</tbody>
    </table>
  );
}

function TitleBlock() {
  return (
    <div className="flex w-[89px] flex-col gap-px border-l border-black p-px font-['Liberation_Sans',Arial,sans-serif] text-black">
      <div className="border border-black">
        <div className="flex h-[59px] items-center justify-center gap-[3px] border-b border-black pt-1">
          <Svg w={13} h={12}><path d="M0 12L5 0l1.500 3.500L3.500 12z" fill="#57b947" /><path d="M5 0h3l5 12H9.500z" fill="#2b6fb5" /><path d="M0 12L2 7l8 2-2 2.500-5-.5z" fill="#1f9dc4" /></Svg>
          <span className="font-['Lato',sans-serif] text-[11px] leading-3 font-bold">AUTODESK</span>
        </div>
        <div className="h-[11px] text-center text-[4px] leading-[11px]">www.autodesk.com/revit</div>
      </div>
      <div className="flex h-[170px] flex-col gap-[10px] border border-black pt-[10px] pl-[8px] text-[4px] leading-[3px]">
        {[0, 1, 2, 3, 4].map((n) => (
          <div key={n}>{["Consultant", "Address", "Address", "Address", "Phone"].map((t, i) => <div key={i}>{t}</div>)}</div>
        ))}
      </div>
      <table className="w-full table-fixed border-collapse border border-black text-[5px] leading-[4px] font-bold">
        <colgroup><col className="w-[17px]" /><col /><col className="w-[17px]" /></colgroup>
        <thead><tr className="h-[8px]">{["No.", "Description", "Date"].map((t) => <th key={t} className="border border-black p-0 text-left">{t}</th>)}</tr></thead>
        <tbody>{Array.from({ length: 22 }, (_, i) => <tr key={i} className="h-[4px]">{[0, 1, 2].map((c) => <td key={c} className="border border-black p-0" />)}</tr>)}</tbody>
      </table>
      <div className="flex flex-1 flex-col border border-black text-center">
        <div className="flex h-[42px] flex-col justify-between border-b border-black pt-[1px] pb-[4px] text-[9px] leading-[11px]"><span>Owner</span><span>Project Name</span></div>
        <div className="h-[24px] border-b border-black text-[9px] leading-[10px]">Unnamed</div>
        {[["Project Number", "Project Number"], ["Date", "Issue Date"], ["Drawn By", "Author"], ["Checked By", "Checker"]].map(([a, b]) => (
          <div key={a} className="flex h-[6px] justify-between border-b border-black pr-[2px] leading-[5px]"><span className="text-[3px] leading-[3px]">{a}</span><span className="text-[5px]">{b}</span></div>
        ))}
        <div className="flex-1 border-b border-black text-sm leading-[17px]">S.1</div>
        <div className="h-[5px] text-left text-[3px] leading-[3px]">Scale</div>
      </div>
    </div>
  );
}

function Canvas() {
  return (
    <main className="ml-[3px] flex min-w-0 flex-1 flex-col border-t-2 border-l-2 border-[#848484] bg-white">
      <div className="flex flex-1">
        <div className="relative flex-1 overflow-hidden">
          <div className="absolute top-[70px] left-[231px] h-[505px] w-[706px] border border-[#333] bg-white font-['Liberation_Sans',Arial,sans-serif] text-black">
            <div className="mt-[16px] ml-[21px] flex h-[462px] w-[664px] justify-between border border-black">
              <div className="relative">
                <div className="absolute top-[40px] left-[71px] flex items-start gap-[6px]">
                  <Schedule list={listA} />
                  <Schedule list={listB} />
                  <Schedule list={listC} />
                </div>
              </div>
              <TitleBlock />
            </div>
            <span className="absolute right-[11px] bottom-[26px] text-[4px] leading-[5px] font-bold [writing-mode:vertical-rl]">3/2/2021 6:46</span>
          </div>
          <div className="absolute top-[6px] right-[3px] flex items-center gap-[4px]">
            <Svg w={10} h={10}><path d="M.5 6.500h9v2h-9z" stroke="#555" fill="#fff" /></Svg>
            <Svg w={10} h={10}><path d="M2.500 2.500v-2h7v7h-2" stroke="#444" /><path d="M.5 2.500h7v7h-7zM2.500 6h3v1h-3z" stroke="#444" /></Svg>
            <Svg w={10} h={10}><path d="M1 1h2l2 2 2-2h2v2L7 5l2 2v2H7L5 7 3 9H1V7l2-2-2-2z" stroke="#444" /></Svg>
          </div>
          <div className="absolute top-[22px] right-[2px] flex h-[94px] w-[28px] flex-col items-center justify-between rounded-md border-2 border-[#c6c6c6] bg-[#f2f2f2] py-px">
            <Svg w={8} h={8} className="self-end"><circle cx="3.500" cy="3.500" r="2.500" stroke="#aaa" /><path d="M2.500 2.500l2 2M4.500 2.500l-2 2" stroke="#aaa" /></Svg>
            <button type="button" aria-label="Steering wheel" className="flex flex-col items-center">
              <Svg w={20} h={20}><circle cx="8" cy="8" r="7" fill="#e9e9e9" stroke="#b0b0b0" /><circle cx="8" cy="8" r="3.500" fill="#fff" stroke="#b0b0b0" /><path d="M1 8v6q0 2 2 2h6" stroke="#b0b0b0" /><path d="M10 13.500q3-2 3 .5l-3 4h4M15.500 12.500v5.500q4 0 4-2.800t-4-2.700" stroke="#84a9cf" strokeWidth="1.300" /></Svg>
              <span className="mt-[3px]"><Caret dark={false} /></span>
            </button>
            <span className="h-px w-[20px] bg-[#c9c9c9]" />
            <button type="button" aria-label="Zoom" className="flex flex-col items-center">
              <Svg w={14} h={14}><path d="M1 1h9v9H1z" fill="#bcd6a6" stroke="#a9c394" /><circle cx="9" cy="9" r="2.800" fill="#fff" stroke="#999" /><path d="M11 11l3 3" stroke="#999" strokeWidth="1.500" /></Svg>
              <span className="mt-[5px]"><Caret dark={false} /></span>
            </button>
            <Svg w={8} h={8} className="self-end"><circle cx="3.500" cy="3.500" r="2.500" stroke="#aaa" /><path d="M2 3.500h3" stroke="#aaa" /></Svg>
          </div>
        </div>
        <div className="flex w-[16px] flex-col items-center bg-[#f0f0f0]">
          <span className="flex h-[17px] items-center"><Chevron dir="up" /></span>
          <span className="mt-[280px] h-[17px] w-[15px] bg-[#cdcdcd]" />
          <span className="flex flex-1 items-end pb-[4px]"><Chevron dir="down" /></span>
        </div>
      </div>
      <div className="flex h-[19px] items-center bg-[#f0f0f0]">
        <button type="button" aria-label="Temporary hide" className="ml-[2px]"><Svg w={16} h={12}><path d="M0 3l3 4M4 6q-1-3 3-3M14 7q2-5-3-5" stroke="#667" strokeWidth="1.300" /><path d="M3 7h5q1 4-2 4t-3-4zM9 6h5q1 4-2 4T9 6z" fill="#cfe0f0" stroke="#667" strokeWidth="1.300" /></Svg></button>
        <button type="button" aria-label="Reveal hidden" className="ml-[7px]"><Svg w={8} h={12}><circle cx="4" cy="4" r="3" fill="#d9ecfb" stroke="#3f87c9" strokeWidth="1.500" /><path d="M3 8h2v3H3z" fill="#777" /></Svg></button>
        <span className="ml-[9px]"><Chevron dir="left" /></span>
        <span className="flex flex-1 justify-center"><span className="h-[15px] w-[17px] bg-[#cdcdcd]" /></span>
        <Chevron dir="right" />
        <Svg w={12} h={12} className="ml-[8px] mr-[2px]"><path d="M9 1h2v2H9zM5 5h2v2H5zM9 5h2v2H9zM1 9h2v2H1zM5 9h2v2H5zM9 9h2v2H9z" fill="#b8b8b8" /></Svg>
      </div>
    </main>
  );
}

type Node = { t: string; lv: 0 | 1 | 2; box?: "-" | "+"; icon?: string; end?: boolean; rail0?: boolean; rail1?: boolean; bold?: boolean; first?: boolean };
const nodes: Node[] = [
  { t: "Views (all)", lv: 0, box: "-", icon: "views", first: true },
  { t: "Structural Plans", lv: 1, box: "-", rail0: true },
  { t: "1st", lv: 2, rail0: true, rail1: true },
  { t: "2nd", lv: 2, rail0: true, rail1: true },
  { t: "Base level", lv: 2, rail0: true, rail1: true },
  { t: "Site", lv: 2, rail0: true, rail1: true, end: true },
  { t: "3D Views", lv: 1, box: "-", rail0: true },
  { t: "Analytical Model", lv: 2, rail0: true, rail1: true },
  { t: "{3D}", lv: 2, rail0: true, rail1: true, end: true },
  { t: "Elevations (Building Elevation)", lv: 1, box: "-", rail0: true, end: true },
  { t: "East", lv: 2, rail0: true },
  { t: "North", lv: 2, rail0: true },
  { t: "South", lv: 2, rail0: true },
  { t: "West", lv: 2, rail0: true, end: true },
  { t: "Legends", lv: 0, icon: "legends" },
  { t: "Schedules/Quantities", lv: 0, box: "-", icon: "sched" },
  { t: "La liste d'armature des elements structuraux", lv: 1, rail0: true, end: true },
  { t: "Sheets (all)", lv: 0, box: "-", icon: "sheets" },
  { t: "S.1 - Unnamed", lv: 1, box: "+", rail0: true, end: true, bold: true },
  { t: "Families", lv: 0, box: "+", icon: "families" },
  { t: "Groups", lv: 0, box: "+", icon: "groups" },
  { t: "Revit Links", lv: 0, icon: "links", end: true },
];

const treeIcons: Record<string, React.ReactNode> = {
  views: <><path d="M1 4V1h3M12 1h3v3M15 12v3h-3M4 15H1v-3" stroke="#555" strokeWidth="1.300" /><path d="M4.500 6.500l2-2h5v5l-2 2h-5z" fill="#e6eaee" stroke="#667" strokeWidth="1.300" /></>,
  legends: <><path d="M.5 1.500h15v13H.5z" fill="#e8eaed" stroke="#888" /><path d="M0 1h16v3H0z" fill="#59636f" /><path d="M2 6h4v3H2zM3 11h2v2H3z" fill="#667" /><path d="M8 7h6M8 12h6" stroke="#888" strokeWidth="2" strokeDasharray="2 1" /></>,
  sched: <><path d="M.5 1.500h15v12H.5z" fill="#f5f5f5" stroke="#999" /><path d="M0 1h16v3H0z" fill="#59636f" /><path d="M1 7h14M1 10h14M5 4v9M10 4v9" stroke="#b5b5b5" /></>,
  sheets: <><path d="M1 2h11l3 3v9H1z" fill="#eef0f2" stroke="#59636f" strokeWidth="1.400" /><path d="M3 5h7v7H7V8H3zM3 10h2v2H3z" fill="#c0ccd8" stroke="#8593a3" /></>,
  families: <><path d="M1 8V1h4v5h4v2z" fill="#cdd6df" stroke="#667" /><path d="M6 1h4v4H6z" fill="#f0f2f4" stroke="#667" /><path d="M1 10h9V1h5v13H1z" fill="#e3e7eb" stroke="#59636f" strokeWidth="1.300" /></>,
  groups: <><path d="M3 1H1v14h2M13 1h2v14h-2" stroke="#555" strokeWidth="1.300" /><circle cx="7" cy="6" r="3.500" fill="#c8d0d8" stroke="#667" /><path d="M7 7h5v5l-2 1-3-2z" fill="#dbe3ea" stroke="#667" /></>,
  links: <><rect x="1" y="5" width="8" height="6" rx="3" fill="#f6c65b" stroke="#d98f17" strokeWidth="2" /><rect x="7" y="5" width="8" height="6" rx="3" fill="#f6c65b" stroke="#c98314" strokeWidth="2" /><path d="M4 8h8" stroke="#a8690c" strokeWidth="1.500" /></>,
};

function TreeBox({ x, sign }: { x: number; sign: "-" | "+" }) {
  return (
    <g>
      <rect x={x - 5} y="4.500" width="10" height="10" rx="1" fill="#fafafa" stroke="#999" />
      <path d={`M${x - 3} 9.500h6${sign === "+" ? `M${x} 6.500v6` : ""}`} stroke="#3b62ad" />
    </g>
  );
}

function TreeRow({ n, i }: { n: Node; i: number }) {
  const w = n.lv === 0 ? 20 : n.lv === 1 ? 45 : 66;
  const x = n.lv === 0 ? 8.5 : n.lv === 1 ? 29.5 : 50.5;
  const stop = n.lv === 0 ? 20 : n.lv === 1 ? 43 : 64;
  const h = i % 3 === 1 ? "h-[17px]" : "h-[18px]";
  return (
    <li className={`flex items-center overflow-hidden text-xs whitespace-nowrap text-[#222] ${h}`}>
      <Svg w={w} h={18}>
        <g stroke="#aaa" strokeDasharray="1 1">
          {n.rail0 && <path d="M8.500 0v18" />}
          {n.rail1 && <path d="M29.500 0v18" />}
          <path d={`M${x} ${n.first ? 9 : 0}V${n.end ? 9 : 18}`} />
          <path d={`M${x} 9.500H${stop}`} />
        </g>
        {n.box && <TreeBox x={x} sign={n.box} />}
      </Svg>
      {n.icon && <Svg w={16} h={16} className="mr-[4px] ml-px">{treeIcons[n.icon]}</Svg>}
      <a href="#view" className={n.bold ? "-ml-[2px] bg-[#e3e3e3] px-[2px] leading-[17px] font-bold text-black" : ""}>{n.t}</a>
    </li>
  );
}

function Browser() {
  return (
    <aside className="ml-1 flex w-[226px] shrink-0 flex-col bg-[#f0f0f0]">
      <PanelTitle>Project Browser - Revit project</PanelTitle>
      <div className="mt-px flex flex-1 flex-col overflow-hidden border-t-2 border-l-2 border-[#848484] bg-white">
        <ul className="flex-1">{nodes.map((n, i) => <TreeRow key={i} n={n} i={i} />)}</ul>
        <div className="flex h-[17px] items-center bg-[#f0f0f0] pr-[3px] pl-[2px]">
          <Chevron dir="left" />
          <span className="ml-[5px] h-[15px] w-[148px] bg-[#cdcdcd]" />
          <span className="flex-1" />
          <Chevron dir="right" />
        </div>
      </div>
    </aside>
  );
}

const Pointer = () => <path d="M8 5v9l2-2 2 4 1.500-1-1.500-3.500h3z" fill="#fff" stroke="#333" />;

function StatusBar() {
  return (
    <footer className="flex h-[23px] items-center border-t-2 border-[#a5a5a5] bg-[#d3d3d3] text-xs text-[#333]">
      <p className="w-[555px] pl-px text-[11px] whitespace-nowrap text-[#222]">Click to select, TAB for alternates, CTRL adds, SHIFT unselects.</p>
      <Svg w={18} h={16}><path d="M2 8h4v7H2zM8 6h4v9H8zM13 8h3v7h-3zM3 7l5-5M8 2h4v3" fill="#b5b5b5" stroke="#8a8a8a" /></Svg>
      <span className="ml-[6px] grid w-[204px] items-center">
        <select aria-label="Workset" disabled className="h-[19px] appearance-none bg-white [grid-area:1/1]"><option></option></select>
        <span className="pointer-events-none mr-[2px] justify-self-end [grid-area:1/1]"><Svg w={10} h={10}><path d="M1 3l4 4 4-4" stroke="#aaa" /></Svg></span>
      </span>
      <Svg w={14} h={16} className="ml-[7px]"><path d="M4 1h9v5H8l-3 5H3l3-5H4zM1 11h7v4H1z" fill="#c4c4c4" stroke="#999" /></Svg>
      <span className="ml-[5px] w-[28px]">:0</span>
      <Svg w={17} h={16}><rect x="1" y="1" width="15" height="14" rx="1" fill="#f4f6f8" stroke="#3d4854" strokeWidth="1.600" /><path d="M1 3h15" stroke="#3d4854" strokeWidth="3" /><path d="M4 7h3M5 7v5h3M9 7.500h5M9 10h5M9 12.500h5" stroke="#3d4854" /></Svg>
      <Svg w={16} h={16} className="ml-[7px]"><path d="M4 1h11v13H8l-3-4z" fill="#999" /><path d="M1 8h6M4 5l4 3-4 4" stroke="#bbb" strokeWidth="2" /></Svg>
      <span className="ml-[5px] grid w-[205px] items-center">
        <select aria-label="Design option" disabled className="h-[19px] appearance-none bg-white pl-[2px] text-xs text-[#8a8a8a] [grid-area:1/1]"><option>Main Model</option></select>
        <span className="pointer-events-none mr-[2px] justify-self-end [grid-area:1/1]"><Svg w={10} h={10}><path d="M1 3l4 4 4-4" stroke="#aaa" /></Svg></span>
      </span>
      <div className="ml-auto flex w-[224px] items-center">
        <button type="button" aria-label="Select links" className="w-[24px]"><Svg w={16} h={17}><rect x="1" y="2" width="7" height="5" rx="2.500" fill="#f6c65b" stroke="#e09a1c" strokeWidth="2" /><rect x="8" y="2" width="7" height="5" rx="2.500" fill="#f6c65b" stroke="#e0a52c" strokeWidth="2" /><Pointer /></Svg></button>
        <button type="button" aria-label="Select underlay" className="w-[24px]"><Svg w={17} h={17}><path d="M1 14l5-8h8M1 14h9M3 10h8" stroke="#3d7fb8" strokeWidth="1.500" /><path d="M9 1l6 6M15 1L9 7" stroke="#d8261c" strokeWidth="2" /><Pointer /></Svg></button>
        <button type="button" aria-label="Select pinned" className="w-[24px]"><Svg w={17} h={17}><path d="M2 1h8v3H8v3h3v3H1V7h3V4H2z" fill="#e9953f" stroke="#b5631a" /><path d="M6 10v5" stroke="#555" /><Pointer /></Svg></button>
        <button type="button" aria-label="Select by face" className="w-[24px]"><Svg w={17} h={17}><path d="M1 4l6-2v11l-6 2z" fill="#a9d1f0" stroke="#3d7fb8" /><path d="M9 1l6 6M15 1L9 7" stroke="#d8261c" strokeWidth="2" /><Pointer /></Svg></button>
        <button type="button" aria-label="Drag on selection" className="w-[24px]"><Svg w={17} h={17}><path d="M6 1v10M1 6h10M4.500 2.500L6 1l1.500 1.500M2.500 4.500L1 6l1.500 1.500" stroke="#333" strokeWidth="1.200" /><Pointer /></Svg></button>
        <button type="button" aria-label="Background processes" className="w-[22px]"><Svg w={16} h={16}><circle cx="8" cy="8" r="5" stroke="#a3a3a3" strokeWidth="3" strokeDasharray="3 1" /></Svg></button>
        <button type="button" aria-label="Filter" className="flex items-center"><Svg w={17} h={17}><path d="M1 2h15l-6 7v6H7V9z" fill="#b9c9d9" stroke="#4d5966" strokeWidth="1.300" /></Svg>:0</button>
      </div>
    </footer>
  );
}

function TaskApp({ label, open, active, children }: Kids & { label: string; open?: boolean; active?: boolean }) {
  return (
    <button type="button" aria-label={label} className={`flex h-10 flex-1 flex-col items-center ${active ? "bg-[#f7f3d8]" : ""}`}>
      <span className="flex flex-1 items-center pt-[2px]">{children}</span>
      <span className={`h-[2px] ${active ? "w-full" : "w-[41px]"} ${open ? "bg-[#1673d1]" : ""}`} />
    </button>
  );
}

function Tray({ label, children }: Kids & { label: string }) {
  return <button type="button" aria-label={label} className="flex w-6 shrink-0 justify-center">{children}</button>;
}

function Taskbar() {
  return (
    <div className="flex h-10 items-center bg-linear-to-r from-[#d0e0cc] from-25% via-[#efe8b2] via-35% to-[#f1ebb9] to-100%">
      <button type="button" aria-label="Start" className="flex w-[49px] shrink-0 justify-center">
        <Svg w={16} h={16}><path d="M0 2.300l6.500-1v6.200H0zM7.500 1.100L16 0v7.500H7.500zM0 8.500h6.500v6.200L0 13.700zM7.500 8.500H16V16l-8.500-1.100z" fill="#111" /></Svg>
      </button>
      <label className="flex h-[39px] w-[342px] shrink-0 items-center gap-[11px] self-end border-b border-[#ccc] bg-white pl-[10px]">
        <Svg w={18} h={18}><circle cx="11" cy="7" r="5.500" stroke="#222" strokeWidth="1.300" /><path d="M7 11l-6 6" stroke="#222" strokeWidth="1.300" /></Svg>
        <input aria-label="Search" placeholder="Type here to search" className="min-w-0 flex-1 text-sm outline-none placeholder:text-[#444]" />
      </label>
      <button type="button" aria-label="Cortana" className="flex w-[50px] shrink-0 justify-center"><Svg w={18} h={18}><circle cx="9" cy="9" r="7" stroke="#111" strokeWidth="2" /></Svg></button>
      <button type="button" aria-label="Task view" className="flex w-[48px] shrink-0 justify-center pr-1"><Svg w={17} h={16}><path d="M1 0v3h10V0M1 16v-3h10v3M1 5.500h10v5H1zM14.500 0v3M14.500 7v9" stroke="#222" strokeWidth="1.200" /><path d="M13 4h3v2h-3z" fill="#222" /></Svg></button>
      <div className="flex w-[497px] shrink-0">
        <TaskApp label="Edge" open>
          <Svg w={24} h={24}><defs><linearGradient id="eg" x1="0" y1="0" x2="24" y2="8" gradientUnits="userSpaceOnUse"><stop stopColor="#24a5dd" /><stop offset="1" stopColor="#56d364" /></linearGradient></defs><circle cx="12" cy="12" r="11.500" fill="#1268b8" /><path d="M.5 11C2 3 8 .5 12 .5c7 0 11.500 5 11.500 10 0 4-3 6-6 6-3.500 0-4-1.500-3-2.500 2-3-.5-6-4.500-6C5 8 1.500 9 .5 11z" fill="url(#eg)" /><path d="M8 14c0 5 5 8 11 6l3-2c-3 2-9 1-9-4 1-2 1-3 0-4-3 0-5 2-5 4z" fill="#efe8b2" /><path d="M8 14c0 6 7 8 12 5-5 6-16 4-16-3 0-5 4-7 8-6-3 0-4 2-4 4z" fill="#1b86d2" /></Svg>
        </TaskApp>
        <TaskApp label="Firefox">
          <Svg w={24} h={24}><path d="M13 0c3 2 4 4 5 6 2 0 3 0 3-1 3 8 1 18-9 18C4 23 0 17 2 9c1-3 2-4 2-5l3 3c2-1 4-1 5-3z" fill="#ff7a1f" /><path d="M13 0c3 2 4 4 5 6l3 4c0 5-3 8-6 9 3-8-2-10-3-13 0-3 1-4 1-6z" fill="#ffcf33" /><circle cx="11.500" cy="13" r="5" fill="#7543c5" /><path d="M2 12c1 5 5 6 9 5 2 0 4-2 4-2 1 4-3 6-6 6-4 0-7-4-7-9z" fill="#ee2f55" /></Svg>
        </TaskApp>
        <TaskApp label="File Explorer">
          <Svg w={22} h={19}><path d="M0 1h8l2 3h11v14H0z" fill="#f4b93e" /><path d="M0 5h22v13H0z" fill="#ffd766" /><path d="M4 18v-7h14v7h-4v-3H8v3z" fill="#3f8fd2" /></Svg>
        </TaskApp>
        <TaskApp label="Booking"><span className="flex h-6 w-6 items-center justify-center bg-[#04417e] text-sm font-bold text-white">B<span className="text-[#28a5e8]">.</span></span></TaskApp>
        <TaskApp label="Netflix"><span className="flex h-6 w-6 items-center justify-center bg-black"><Svg w={9} h={15}><path d="M0 0h3v15H0zM6 0h3v15H6z" fill="#b00610" /><path d="M0 0h3l6 15H6z" fill="#e80b16" /></Svg></span></TaskApp>
        <TaskApp label="Opera"><Svg w={24} h={24}><ellipse cx="12" cy="12" rx="11.500" ry="11.800" fill="#e21625" /><ellipse cx="12" cy="12" rx="5" ry="8.500" fill="#efe8b2" /><path d="M15 2c9 2 11 16 0 20 4-4 4-16 0-20z" fill="#b50f1c" /></Svg></TaskApp>
        <TaskApp label="Document"><Svg w={18} h={22}><path d="M.5.500h12l5 5v16H.5z" fill="#f8f8f8" stroke="#bbb" /><path d="M12.500.500v5h5" fill="#e4e4e4" stroke="#bbb" /></Svg></TaskApp>
        <TaskApp label="Project"><Svg w={23} h={23}><path d="M1 1h21v21H1z" fill="#cfe0ba" stroke="#8fb35e" /><path d="M11 3h9v6h-7z" fill="#a3c77a" /><path d="M5 17V4h4c5 0 5 7 0 7H5" stroke="#4c5c3a" strokeWidth="2.400" /><path d="M11 14h6v7h-6zM17 11l5 3-3 6-4-2z" fill="#fff" stroke="#8aa865" /></Svg></TaskApp>
        <TaskApp label="Teams" open><Svg w={26} h={25}><circle cx="14" cy="4" r="3.500" fill="#6c74d8" /><circle cx="22" cy="6" r="2.500" fill="#4b53bc" /><path d="M8 9h12v8c0 7-12 7-12 0zM20 10h5v7c-1 3-4 3-5 1z" fill="#6169cf" /><path d="M0 6h13v13H0z" fill="#464eb8" /><path d="M3 9.500h7M6.500 10v6" stroke="#fff" strokeWidth="1.800" /><circle cx="20" cy="19" r="5.500" fill="#7cba38" stroke="#f3efcf" /><path d="M17.500 19l2 2 3-3.500" stroke="#fff" strokeWidth="1.500" /></Svg></TaskApp>
        <TaskApp label="Revit" open active><span className="flex h-6 w-6 items-center justify-center bg-[#dbe9f5]"><RevitLogo size={20} /></span></TaskApp>
      </div>
      <div className="ml-auto flex shrink-0 items-center">
        <Tray label="Show hidden icons"><Svg w={12} h={8}><path d="M1 7l5-5 5 5" stroke="#222" strokeWidth="1.300" /></Svg></Tray>
        <Tray label="Java"><Svg w={15} h={15}><rect width="15" height="15" rx="1" fill="#e2632b" /><path d="M8 2q-4 3-1 5M4 9h7M4 11h7M5 13h5M10 4q-3 2-1 4" stroke="#fff" /></Svg></Tray>
        <Tray label="Battery"><Svg w={16} h={10}><path d="M1 1h12v8H1zM14.500 3v4" stroke="#111" strokeWidth="1.200" /><path d="M2 2h5v6H2z" fill="#111" /></Svg></Tray>
        <Tray label="Camera"><Svg w={13} h={14}><path d="M1 4h7v6H1zM8 6l3-1v4l-3-1M2 2q3-2 6 0M2 12q3 2 6 0" stroke="#222" strokeWidth="1.200" /></Svg></Tray>
        <Tray label="Dropbox"><Svg w={15} h={14}><path d="M4 0l3.500 2.300L4 4.600.500 2.300zM11 0l3.500 2.300L11 4.600 7.500 2.300zM4 5l3.500 2.300L4 9.600.500 7.300zM11 5l3.500 2.300L11 9.600 7.500 7.300zM7.500 9l3.500 2.300-3.500 2.300L4 11.300z" fill="#666" /></Svg></Tray>
        <Tray label="OneDrive"><Svg w={17} h={12}><path d="M4 11a3.500 3.500 0 010-6.500C6 0 11 0 12.500 4 17 4 18 11 13 11z" fill="#777" stroke="#444" /><path d="M4 11l8-5q4 0 4 3t-3 2z" fill="#ddd" /></Svg></Tray>
        <Tray label="Network"><Svg w={14} h={14}><path d="M1 13A12 12 0 0113 2M4 13a9 9 0 019-8M7 13a6 6 0 016-5M10 13a3 3 0 013-2.500" stroke="#444" strokeWidth="1.200" /><circle cx="12.500" cy="12.500" r="1.200" fill="#222" /></Svg></Tray>
        <Tray label="Volume"><Svg w={15} h={12}><path d="M1 4h2l3-3v10L3 8H1zM9 4l5 5M14 4L9 9" stroke="#222" strokeWidth="1.100" /></Svg></Tray>
        <button type="button" className="w-[36px] text-center text-[11px] text-[#222]">ENG</button>
        <button type="button" className="flex w-[60px] flex-col items-center text-[11px] leading-[18px] text-[#222]"><span>6:46 PM</span><span>3/2/2021</span></button>
        <button type="button" aria-label="Notifications, 9 new" className="ml-[16px] mr-[12px] flex">
          <Svg w={24} h={24} className="mt-[4px]"><path d="M0 0h16v13H9l-3 3v-3H0z" fill="#111" /><path d="M3 4h10M3 8h10" stroke="#efe8b2" /><circle cx="15.500" cy="15.500" r="7.500" fill="#dedcc8" stroke="#8c8c80" /><text x="15.500" y="19.500" textAnchor="middle" fontSize="11" fill="#111" fontWeight="600">9</text></Svg>
        </button>
        <span className="mr-[4px] h-10 w-px bg-[#cfc998]" />
      </div>
    </div>
  );
}

export default function App() {
  return (
    <div className="flex min-h-screen flex-col overflow-hidden bg-[#f0f0f0] font-['Open_Sans','Noto_Sans',sans-serif]">
      <TitleBar />
      <Tabs />
      <Ribbon />
      <div className="flex flex-1">
        <Properties />
        <Canvas />
        <Browser />
      </div>
      <StatusBar />
      <Taskbar />
    </div>
  );
}
